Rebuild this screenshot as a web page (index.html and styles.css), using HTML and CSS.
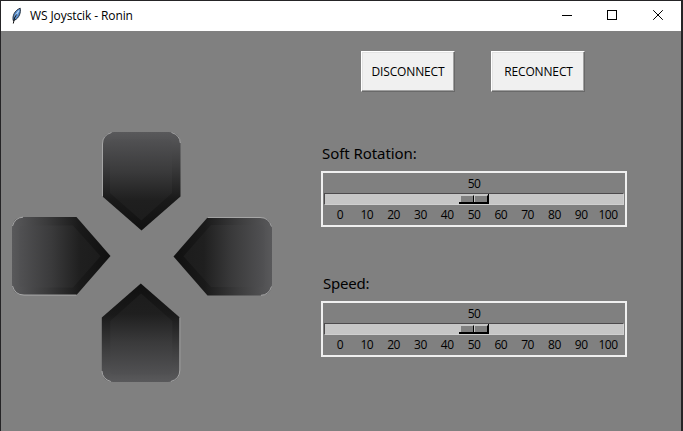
FILE: index.html
```html
<!DOCTYPE html>
<html lang="en">
<head>
<meta charset="utf-8">
<title>WS Joystcik - Ronin</title>
<link rel="stylesheet" href="styles.css">
</head>
<body>
<div class="window">
  <header class="titlebar">
    <svg class="feather" width="12" height="18" viewBox="0 0 12 18">
      <path d="M2.200 13.500C1.200 9 3.500 3.500 9.200 1.200C10 5 8.500 11 3.500 13.200Z" fill="#5a8fd0" stroke="#15202c" stroke-width=".9"/>
      <path d="M4 9.500L8 3.500" stroke="#b9d8f5" stroke-width="1.200" fill="none"/>
      <path d="M2.300 16.500L3.500 11L5.500 7.500" stroke="#111" stroke-width="1" fill="none"/>
    </svg>
    <span class="title">WS Joystcik - Ronin</span>
    <svg class="controls" width="138" height="30" viewBox="0 0 138 30" fill="none" stroke="#000" stroke-width="1">
      <path d="M19 14.500H29"/>
      <rect x="64.500" y="9.500" width="9" height="9"/>
      <path d="M110.200 9.200L119.800 18.800M119.800 9.200L110.200 18.800"/>
    </svg>
  </header>
  <main class="content">
    <svg class="dpad" width="262" height="252" viewBox="0 0 262 252">
      <defs>
        <linearGradient id="rim" x1="0" y1="0" x2="0" y2="1">
          <stop offset="0" stop-color="#59595b"/>
          <stop offset=".35" stop-color="#3b3b3c"/>
          <stop offset=".68" stop-color="#1a1a1a"/>
          <stop offset="1" stop-color="#101010"/>
        </linearGradient>
        <linearGradient id="face" x1="0" y1="0" x2="0" y2="1">
          <stop offset="0" stop-color="#515153"/>
          <stop offset=".4" stop-color="#3a3a3b"/>
          <stop offset=".75" stop-color="#1f1f1f"/>
          <stop offset="1" stop-color="#1c1c1c"/>
        </linearGradient>
        <g id="key">
          <path d="M0 64.500V12Q0 0 12 0H66Q78 0 78 12V64.500L39 98.500Z" fill="url(#rim)"/>
          <path d="M7.500 61V11Q7.500 7.500 11 7.500H66Q69.500 7.500 69.500 11V61L38.800 88.500Z" fill="url(#face)"/>
          <path d="M0 64.500V12Q0 3 9 .5M69 .5Q77.500 3 77.800 11" fill="none" stroke="#b8b8b8" stroke-width=".8"/>
        </g>
      </defs>
      <use href="#key" transform="translate(92.500 2)"/>
      <use href="#key" transform="translate(2 165) rotate(-90)"/>
      <use href="#key" transform="translate(262 87.500) rotate(90)"/>
      <use href="#key" transform="translate(169.800 252) rotate(180)"/>
    </svg>
    <div class="panel">
      <div class="buttons">
        <button class="btn"><span>DISCONNECT</span></button>
        <button class="btn"><span class="shift">RECONNECT</span></button>
      </div>
      <section class="setting">
        <h2 class="label">Soft Rotation:</h2>
        <div class="scale">
          <div class="value">50</div>
          <div class="trough"><div class="thumb"><i></i><i></i></div></div>
          <div class="ticks"><span>0</span><span>10</span><span>20</span><span>30</span><span>40</span><span>50</span><span>60</span><span>70</span><span>80</span><span>90</span><span>100</span></div>
        </div>
      </section>
      <section class="setting">
        <h2 class="label speed">Speed:</h2>
        <div class="scale">
          <div class="value">50</div>
          <div class="trough"><div class="thumb"><i></i><i></i></div></div>
          <div class="ticks"><span>0</span><span>10</span><span>20</span><span>30</span><span>40</span><span>50</span><span>60</span><span>70</span><span>80</span><span>90</span><span>100</span></div>
        </div>
      </section>
    </div>
  </main>
</div>
</body>
</html>
```
FILE: styles.css
```css
* { box-sizing: border-box; }
body { margin: 0; overflow: hidden; }
.window {
  width: 683px;
  height: 431px;
  border: solid #252426;
  border-width: 1px 2px 0 1px;
  background: #808080;
  color: #000;
  font: 12px "Open Sans", "Noto Sans", sans-serif;
}
.titlebar {
  display: flex;
  align-items: center;
  height: 30px;
  padding-left: 10px;
  background: #fff;
}
.feather { margin-right: 7px; }
.title { letter-spacing: -0.1px; white-space: nowrap; line-height: 16px; }
.controls { margin-left: auto; }
.content { display: flex; align-items: flex-start; }
.dpad { margin: 99px 0 0 9px; flex: none; }
.panel { width: 306px; margin: 20px 0 0 49px; }
.buttons { display: flex; gap: 36px; padding-left: 40px; }
.btn {
  width: 94px;
  height: 41px;
  padding: 0;
  border: 1px solid;
  border-color: #fff #696969 #696969 #fff;
  box-shadow: inset -1px -1px #a0a0a0, inset 1px 1px #e3e3e3;
  background: #f0f0f0;
  color: #000;
  font: inherit;
  letter-spacing: -0.15px;
}
.shift { padding-left: 1px; }
.setting { padding-top: 51px; }
.setting + .setting { padding-top: 46px; }
.label {
  height: 28px;
  margin: 0;
  padding-left: 1px;
  font: 15px/20px "Noto Sans", sans-serif;
  letter-spacing: -0.07px;
}
.speed { padding-left: 2px; letter-spacing: -0.2px; }
.scale { height: 56px; border: 2px solid #f0f0f0; padding: 0 1px; }
.value { height: 20px; line-height: 21px; text-align: center; letter-spacing: -0.5px; }
.trough {
  display: flex;
  justify-content: center;
  height: 12px;
  border: 1px solid;
  border-color: #4c4a4c #d0d0d0 #d0d0d0 #4c4a4c;
  background: #c6c6c6;
}
.thumb {
  display: flex;
  width: 30px;
  height: 10px;
  padding: 1px 0 0 1px;
  border: solid #000;
  border-width: 0 1px 2px 0;
  background: #c6c6c6;
}
.thumb i {
  width: 14px;
  height: 7px;
  border: solid;
  border-width: 1px 1px 0 1px;
  border-color: #c6c6c6 #000 #000 #c6c6c6;
  background: #808080;
}
.ticks {
  display: grid;
  grid-template-columns: repeat(11, 26.8px);
  justify-content: center;
  line-height: 20px;
  text-align: center;
  letter-spacing: -0.5px;
}
```
